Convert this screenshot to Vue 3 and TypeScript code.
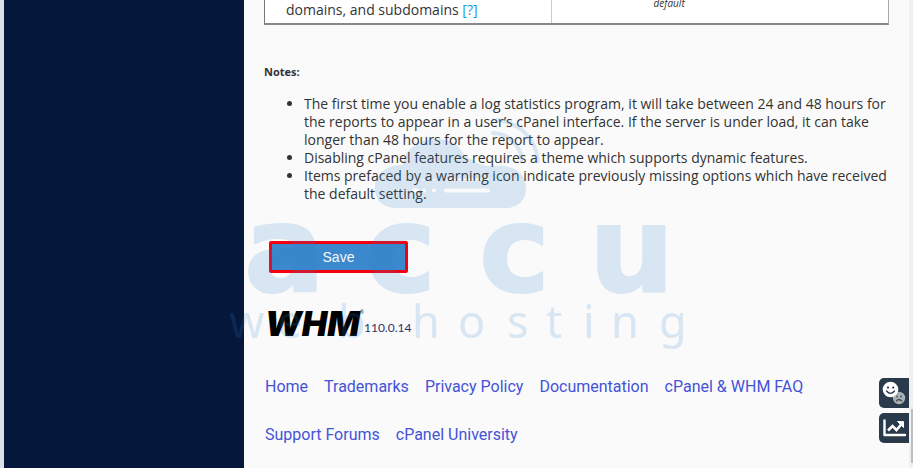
<script setup lang="ts">
interface FooterLink {
  label: string
  href: string
}

const notes: string[] = [
  'The first time you enable a log statistics program, it will take between 24 and 48 hours for the reports to appear in a user’s cPanel interface. If the server is under load, it can take longer than 48 hours for the report to appear.',
  'Disabling cPanel features requires a theme which supports dynamic features.',
  'Items prefaced by a warning icon indicate previously missing options which have received the default setting.',
]

const links: FooterLink[] = [
  { label: 'Home', href: '#home' },
  { label: 'Trademarks', href: '#trademarks' },
  { label: 'Privacy Policy', href: '#privacy' },
  { label: 'Documentation', href: '#documentation' },
  { label: 'cPanel & WHM FAQ', href: '#faq' },
  { label: 'Support Forums', href: '#forums' },
  { label: 'cPanel University', href: '#university' },
]
</script>

<template>
  <div class="page">
    <aside class="sidebar"></aside>

    <main class="content">
      <table class="settings">
        <tbody>
          <tr>
            <td class="setting-name">domains, and subdomains <a href="#help">[?]</a></td>
            <td class="setting-value"><em>default</em></td>
          </tr>
        </tbody>
      </table>

      <h2 class="notes-title">Notes:</h2>
      <ul class="notes">
        <li v-for="note in notes" :key="note">{{ note }}</li>
      </ul>

      <button type="submit" class="save">Save</button>

      <footer class="footer">
        <div class="brand">
          <span class="brand-name">WHM</span><sup class="brand-mark">®</sup>
          <span class="brand-version">110.0.14</span>
        </div>
        <nav class="links">
          <a v-for="link in links" :key="link.label" :href="link.href">{{ link.label }}</a>
        </nav>
      </footer>
    </main>

    <div class="scroll-track"><div class="scroll-thumb"></div></div>

    <div class="tools">
      <button type="button" class="tool" aria-label="Feedback">
        <svg width="30" height="30" viewBox="0 0 30 30">
          <circle cx="20" cy="20" r="6.200" fill="#a9b0b6" />
          <circle cx="18" cy="18.500" r="0.900" fill="#46535e" />
          <circle cx="22" cy="18.500" r="0.900" fill="#46535e" />
          <path d="M17 23.300q3-3.600 6 0" fill="none" stroke="#46535e" stroke-width="1.300" />
          <circle cx="11.500" cy="11.500" r="7.800" fill="#fff" />
          <circle cx="9" cy="9.600" r="1.100" fill="#293a4a" />
          <circle cx="14.200" cy="9.600" r="1.100" fill="#293a4a" />
          <path d="M7.500 13q4 4.600 8 0" fill="none" stroke="#293a4a" stroke-width="1.300" stroke-linecap="round" />
        </svg>
      </button>
      <button type="button" class="tool" aria-label="Analytics">
        <svg width="30" height="30" viewBox="0 0 30 30" fill="none" stroke="#fff">
          <path d="M5.500 7.500v14.500h20.500" stroke-width="2.400" stroke-linecap="round" stroke-linejoin="round" />
          <path d="M9 17.500l4.500-4.500 4 4 5-6" stroke-width="2.600" />
          <path d="M18.500 8.500h6v6z" fill="#fff" stroke-width="1" stroke-linejoin="round" />
        </svg>
      </button>
    </div>

    <div class="watermark">
      <svg width="458" height="234" viewBox="0 0 458 234">
        <defs>
          <mask id="cloud-slots">
            <rect width="458" height="234" fill="#fff" />
            <g stroke="#000" stroke-width="4" stroke-linecap="round">
              <path d="M218 73.500h42" />
              <path d="M186 73.500h3M196 73.500h.1M206 73.500h.1" />
              <path d="M196 62.500h.1M206 62.500h.1M218 62.500h42" stroke-width="2" />
            </g>
          </mask>
        </defs>
        <path
          mask="url(#cloud-slots)"
          d="M168 91h110c12 0 20-8 20-20 0-14-11-22-25-22h-10c-14 0-18-7-27-10-4-12-15-17-28-17-17 0-31 9-33 26-17 0-28 9-28 23 0 13 9 20 21 20z"
        />
        <path d="M270 3a45 45 0 0 1 40 41M265 16a30 30 0 0 1 29 27" class="signal" />
        <text class="mark-name" y="174" x="16 137 251 361">accu</text>
        <text class="mark-sub" y="221" x="1 49 110 151 184 230 279 318 355 383 431">web hosting</text>
      </svg>
    </div>
  </div>
</template>

<style>
body {
  margin: 0;
  background: #fafafa;
}
</style>

<style scoped>
.page {
  position: relative;
  display: flex;
  min-height: 100vh;
  box-sizing: border-box;
  border-left: 4px solid #dbe0e6;
  background: #fafafa;
  color: #333;
  font: 14px/18px 'Open Sans', 'Noto Sans', sans-serif;
}

.sidebar {
  flex: 0 0 240px;
  background: #05183c;
}

.content {
  flex: 1;
  min-width: 0;
  padding: 0 20px;
}

.settings {
  width: 100%;
  border-collapse: separate;
  border-spacing: 0;
  border: 1px solid #aaa;
  border-top: 0;
  border-left-color: #777;
  border-bottom: 2px solid #888;
  background: #fff;
}

.settings td {
  padding: 0;
  vertical-align: top;
}

.settings .setting-name {
  width: 46%;
  box-sizing: border-box;
  padding: 1px 0 4px 21px;
  border-right: 1px solid #ccc;
}

.setting-name a {
  color: #179bd7;
  text-decoration: none;
}

.settings .setting-value {
  padding-left: 102px;
  font-size: 10px;
  line-height: 6px;
}

.notes-title {
  margin: 38px 0 14px;
  font-size: 11px;
  line-height: 18px;
  font-weight: 700;
}

.notes {
  margin: 0;
  padding-left: 40px;
}

.save {
  display: block;
  width: 139px;
  height: 32px;
  margin: 38px 0 0 5px;
  padding: 0;
  border: 3px solid #f5000f;
  border-radius: 2px;
  background: #3c88cc;
  color: #f4f8fc;
  font: 14px/18px 'Liberation Sans', Arial, sans-serif;
}

.footer {
  padding: 33px 0 8px 1px;
}

.brand {
  display: flex;
  align-items: flex-end;
  height: 36px;
}

.brand-name {
  color: #000;
  font: italic 900 34px/36px Inter, Roboto, sans-serif;
}

.brand-mark {
  align-self: flex-start;
  font-size: 5px;
  line-height: 12px;
}

.brand-version {
  color: #2c326c;
  font: 12px/28px Lato, sans-serif;
}

.links {
  display: flex;
  flex-wrap: wrap;
  column-gap: 16px;
  margin-top: 21px;
}

.links a {
  color: #4453d8;
  font: 16px/48px Roboto, sans-serif;
  text-decoration: none;
}

.scroll-track {
  display: flex;
  flex: 0 0 4px;
  flex-direction: column;
  justify-content: flex-end;
  background: #f0f0f0;
}

.scroll-thumb {
  height: 54px;
  margin: 0 0 5px 2px;
  background: #bdbdbd;
}

.tools {
  position: absolute;
  right: 4px;
  bottom: 25px;
  display: grid;
  gap: 5px;
}

.tool {
  width: 30px;
  height: 30px;
  padding: 0;
  border: 0;
  border-radius: 5px 0 0 5px;
  background: #293a4a;
}

.tool svg {
  display: block;
}

.watermark {
  position: fixed;
  inset: 0;
  display: grid;
  place-items: center;
  pointer-events: none;
}

.watermark svg {
  fill: #2b84cb;
  opacity: 0.17;
  overflow: visible;
}

.signal {
  fill: none;
  stroke: #2b84cb;
  stroke-width: 4px;
  stroke-linecap: round;
}

.mark-name {
  font: 700 120px 'DejaVu Sans', sans-serif;
  stroke: #2b84cb;
  stroke-width: 2px;
  stroke-linejoin: round;
}

.mark-sub {
  font: 45px 'Noto Sans', sans-serif;
}
</style>
